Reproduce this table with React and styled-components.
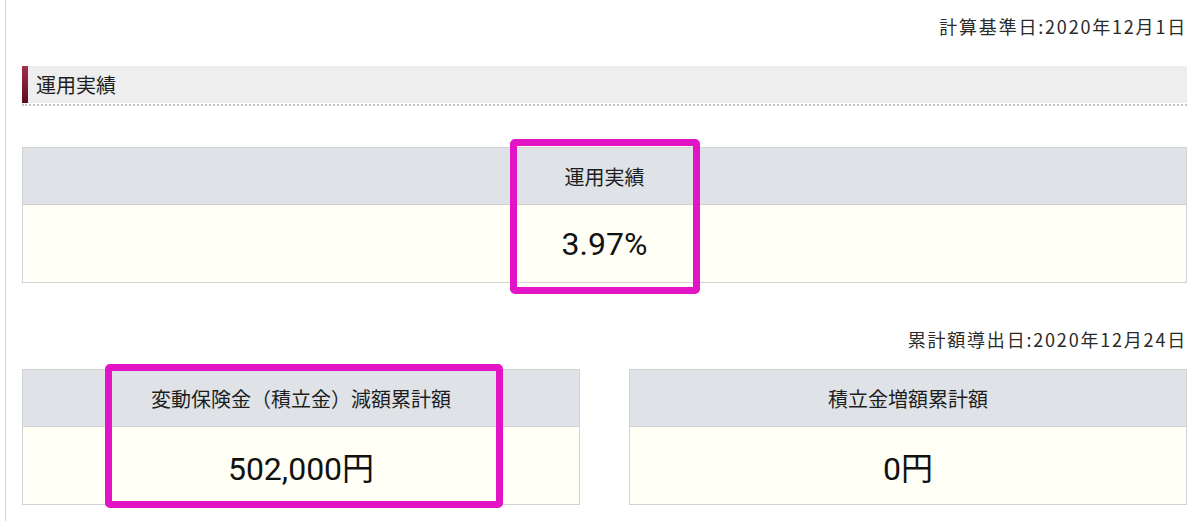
import styled, { createGlobalStyle } from "styled-components";

const GlobalStyle = createGlobalStyle`
  html, body {
    margin: 0;
    padding: 0;
    background: #fff;
  }

  body {
    font-family: "Noto Sans CJK JP", "Noto Sans", sans-serif;
    color: #222;
  }
`;

const results = [
  { id: "total", label: "変動保険金（積立金）減額累計額", value: "502,000円", marked: true },
  { id: "plus", label: "積立金増額累計額", value: "0円" },
];

const App = () => {
  return (
    <Page>
      <GlobalStyle />

      <DateLine>計算基準日:2020年12月1日</DateLine>

      <TitleWrap>
        <TitleBar>運用実績</TitleBar>
      </TitleWrap>

      <Table $top="41px">
        <HeadCell>運用実績</HeadCell>
        <ValueCell>3.97%</ValueCell>
        <Marker $left="calc(50% - 95px)" $top="-9px" $width="190px" $height="155px" />
      </Table>

      <DateLine $top="44px">累計額導出日:2020年12月24日</DateLine>

      <Pair>
        {results.map((item) => (
          <Table key={item.id}>
            <HeadCell>{item.label}</HeadCell>
            <ValueCell>{item.value}</ValueCell>
            {item.marked && (
              <Marker $left="82px" $top="-6px" $width="398px" $height="144px" />
            )}
          </Table>
        ))}
      </Pair>
    </Page>
  );
};

const Page = styled.div`
  margin-left: 5px;
  min-height: 100vh;
  box-sizing: border-box;
  border-left: 1px solid #d4d4d4;
  padding: 14px 13px 0 16px;
`;

const DateLine = styled.div`
  margin-top: ${(p) => p.$top || "0"};
  height: 24px;
  line-height: 24px;
  text-align: right;
  font-size: 18px;
  letter-spacing: 1.8px;
  color: #2a2a2a;
`;

const TitleWrap = styled.div`
  margin-top: 28px;
  padding-bottom: 1px;
  border-bottom: 2px dotted #c4c4c4;
`;

const TitleBar = styled.h2`
  margin: 0;
  height: 37px;
  line-height: 37px;
  padding-left: 14px;
  position: relative;
  background: #eeeeee;
  font-size: 20px;
  font-weight: 400;
  color: #1e1e1e;

  &::before {
    content: "";
    position: absolute;
    left: 0;
    top: 0;
    bottom: 0;
    width: 6px;
    background: linear-gradient(#a3304e, #5b0b1f);
  }
`;

const Table = styled.div`
  position: relative;
  margin-top: ${(p) => p.$top || "0"};
  display: grid;
  grid-template-rows: 57px 77px;
  border: 1px solid #d2d2d2;
`;

const HeadCell = styled.div`
  display: flex;
  align-items: center;
  justify-content: center;
  background: #dfe3e8;
  border-bottom: 1px solid #d0d0d0;
  font-size: 20px;
  color: #1e1e1e;
`;

const ValueCell = styled.div`
  display: flex;
  align-items: center;
  justify-content: center;
  background: #fffff6;
  font-family: Roboto, "Noto Sans CJK JP", sans-serif;
  font-size: 32px;
  color: #111;
`;

const Pair = styled.div`
  margin-top: 18px;
  display: grid;
  grid-template-columns: 1fr 1fr;
  gap: 49px;
`;

const Marker = styled.div`
  position: absolute;
  left: ${(p) => p.$left};
  top: ${(p) => p.$top};
  width: ${(p) => p.$width};
  height: ${(p) => p.$height};
  box-sizing: border-box;
  border: 7px solid #e313c6;
  border-radius: 5px;
  pointer-events: none;
`;

export default App;
